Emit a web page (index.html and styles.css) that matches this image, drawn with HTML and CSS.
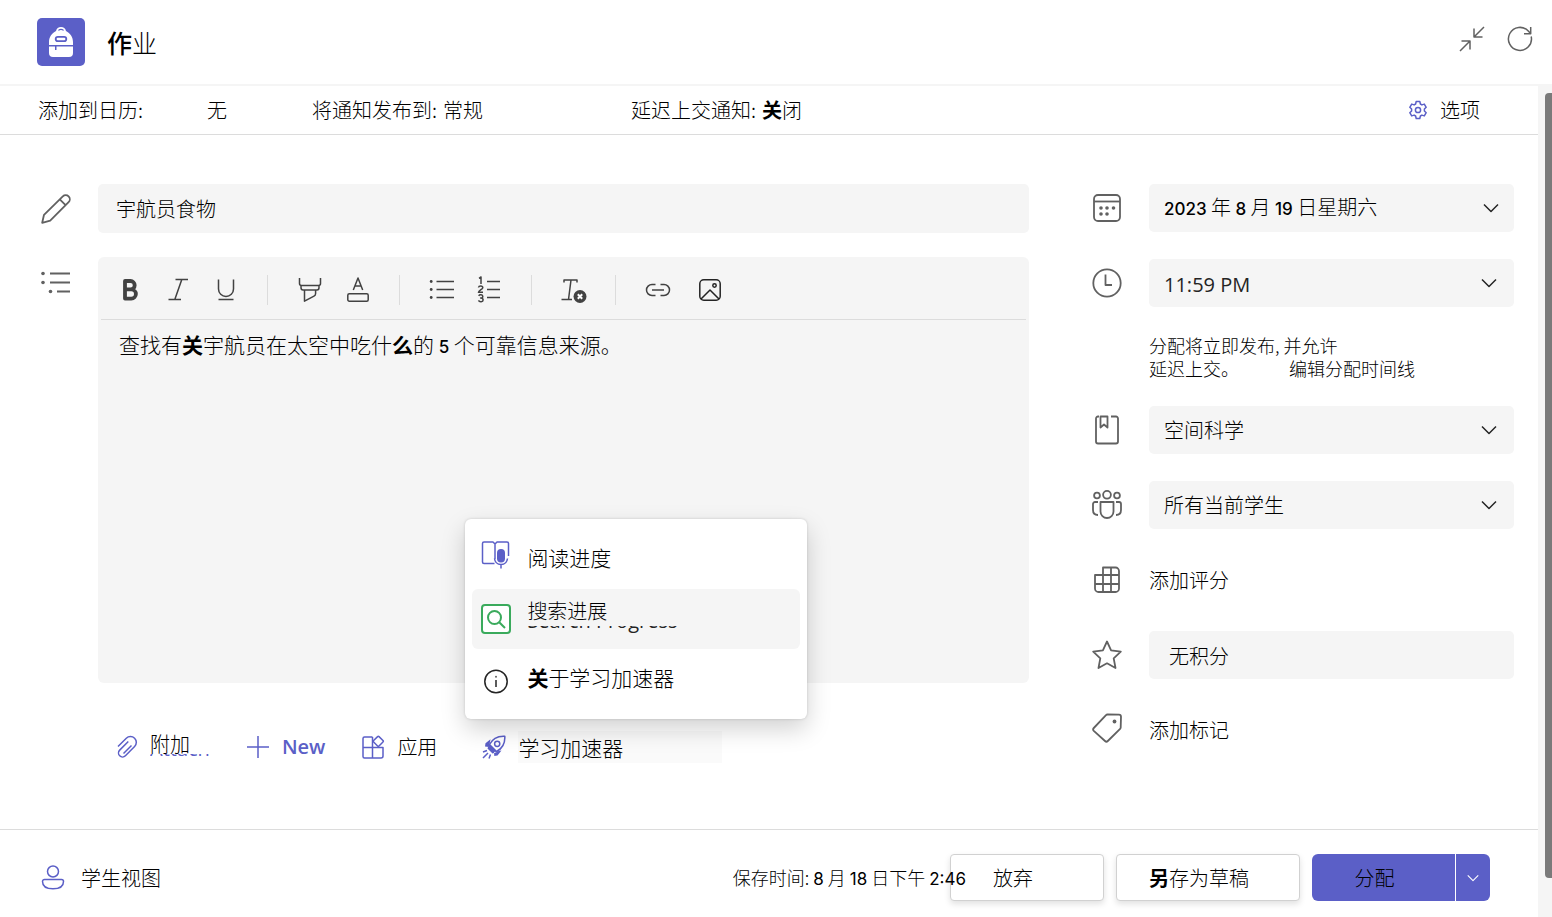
FILE: index.html
```html
<!DOCTYPE html>
<html lang="zh-CN">
<head>
<meta charset="utf-8">
<title>作业</title>
<link rel="stylesheet" href="styles.css">
</head>
<body>
<header class="app-header">
  <svg class="app-logo" viewBox="0 0 48 48" aria-hidden="true">
    <rect width="48" height="48" rx="5" fill="#5b5fc7"/>
    <path d="M19 13C19.5 10.500 21.500 9 24 9s4.500 1.500 5 4c4.300 2.200 7 6.200 7 11v3H12v-3c0-4.800 2.700-8.800 7-11zM12 28.500h6v3.500h1.500v-3.500H36v6.500a4 4 0 0 1-4 4H16a4 4 0 0 1-4-4z" fill="#fff"/>
    <path d="M21.500 12.500c.5-1.500 4.500-1.500 5 0" fill="none" stroke="#5b5fc7" stroke-width="1.200"/>
    <rect x="18.700" y="18.800" width="10.600" height="4.400" rx="2.200" fill="none" stroke="#5b5fc7" stroke-width="1.800"/>
  </svg>
  <h1 class="app-title"><b>作</b>业</h1>
  <button class="icon-button" aria-label="收起">
    <svg width="26" height="26" viewBox="0 0 26 26"><path d="M25 1 15 11M15 2.500V11h8.500M1 25l10-10M2.500 15H11v8.500"/></svg>
  </button>
  <button class="icon-button" aria-label="刷新">
    <svg width="26" height="26" viewBox="0 0 26 26"><path d="M24.200 10.500A11.500 11.500 0 1 1 21.500 5.200L23.500 7.500M23.700 1v6.700H17"/></svg>
  </button>
</header>

<div class="viewport">
  <main class="page">
    <section class="settings">
      <div class="setting setting-wide"><span>添加到日历:</span><span>无</span></div>
      <div class="setting">将通知发布到:<span>常规</span></div>
      <div class="setting">延迟上交通知:<span><b>关</b>闭</span></div>
      <button class="options">
        <svg width="20" height="20" viewBox="0 0 20 20"><path d="M8.200 1.500h3.600l.6 2.500 1.500.9 2.400-.8 1.900 3.200L16.400 9v2l1.800 1.700-1.900 3.200-2.400-.8-1.500.9-.6 2.500H8.200L7.600 16l-1.500-.9-2.400.8-1.900-3.200L3.600 11V9L1.800 7.300l1.900-3.200 2.400.8L7.600 4z"/><circle cx="10" cy="10" r="2.600"/></svg>
        <span>选项</span>
      </button>
    </section>

    <div class="content">
      <section class="compose">
        <label class="row-icon" for="title" aria-label="标题">
          <svg width="30" height="30" viewBox="0 0 30 30"><path d="M1.200 28.800 3 20.800 21.800 2.400a4 4 0 0 1 5.800 5.800L9.200 26.600zM18.800 5.400l5.800 5.800"/></svg>
        </label>
        <input class="field title-input" id="title" type="text" value="宇航员食物">

        <span class="row-icon row-icon-top">
          <svg width="30" height="24" viewBox="0 0 30 24"><path d="M9 3.500h20M9 12.500h20M16 21.500h13"/><g class="fill"><circle cx="2" cy="3.500" r="1.800"/><circle cx="2" cy="12.500" r="1.800"/><circle cx="9.500" cy="21.500" r="1.800"/></g></svg>
        </span>
        <div class="editor">
          <div class="toolbar">
            <button aria-label="加粗"><svg width="26" height="26" viewBox="0 0 26 26"><path d="M8 4h5.500a4.200 4.200 0 0 1 0 8.400H8zM8 12.400h6.300a4.600 4.600 0 0 1 0 9.200H8z" stroke-width="3.800"/></svg></button>
            <button aria-label="斜体"><svg width="26" height="26" viewBox="0 0 26 26"><path d="M10.500 2.500H23M3.500 22.500H16M16.800 2.500l-7 20"/></svg></button>
            <button aria-label="下划线"><svg width="26" height="26" viewBox="0 0 26 26"><path d="M5.500 2.500V12a7.500 7.500 0 0 0 15 0V2.500M5.500 22.500h15"/></svg></button>
            <i class="divider"></i>
            <button aria-label="突出显示"><svg width="26" height="26" viewBox="0 0 26 26"><path d="M2.500 1v5.500c0 1.200.8 2 2 2h17c1.200 0 2-.8 2-2V1M4 8.500v2c0 1.500.8 2.500 2 2.500h14c1.200 0 2-1 2-2.500v-2M7.500 13v11.200l9.500-5a3 3 0 0 0 1.600-2.700V13"/></svg></button>
            <button aria-label="字体颜色"><svg width="26" height="26" viewBox="0 0 26 26"><path d="m8.300 13 4.700-12 4.700 12M10 9h6"/><rect x="2.800" y="16.800" width="20.400" height="7.400" rx="1.500"/></svg></button>
            <i class="divider"></i>
            <button aria-label="项目符号"><svg width="26" height="26" viewBox="0 0 26 26"><path d="M7.500 4.500H25M7.500 12.500H25M7.500 20.500H25"/><g class="fill"><circle cx="2.200" cy="4.500" r="1.400"/><circle cx="2.200" cy="12.500" r="1.400"/><circle cx="2.200" cy="20.500" r="1.400"/></g></svg></button>
            <button aria-label="编号"><svg width="26" height="28" viewBox="0 0 26 28"><path d="M10 5.500h13M10 13.500h13M10 21.500h13"/><path d="M2 2.300 4 1v7M1.500 11.500c.3-2 4.300-2 4.300.2 0 1.300-4 2.800-4.300 4.600H6M1.700 19.800c1-1.700 4.100-1.100 4.100.6 0 1.100-1 1.600-2.200 1.600 1.500 0 2.500.7 2.500 2 0 2.100-3.700 2.400-4.600.4"/></svg></button>
            <i class="divider"></i>
            <button aria-label="清除格式"><svg width="26" height="28" viewBox="0 0 26 28"><path d="M3 6.500V4h13v2.500M10 4 7.500 23.500M.5 23.500H11"/><circle class="fill" cx="19" cy="20.500" r="6.500"/><path class="cross" d="m16.800 18.300 4.400 4.400m0-4.400-4.400 4.400"/></svg></button>
            <i class="divider"></i>
            <button aria-label="链接"><svg width="26" height="26" viewBox="0 0 26 26"><path d="M10.500 7.500H7a5.500 5.500 0 0 0 0 11h3.500M15.500 7.500H19a5.500 5.500 0 0 1 0 11h-3.500M7 13h12"/></svg></button>
            <button class="image-button" aria-label="图像"><svg class="dark" width="26" height="26" viewBox="0 0 26 26"><rect x="2.800" y="2.800" width="20.400" height="20.400" rx="4"/><path d="m4 22 9-9 9 9"/><circle cx="17.500" cy="8.500" r="1.700"/></svg></button>
          </div>
          <div class="editor-text" contenteditable="true" role="textbox" aria-label="说明">查找有<b>关</b>宇航员在太空中吃什<b>么</b>的 <span class="num">5</span> 个可靠信息来源。</div>
        </div>

        <div class="attachments">
          <button class="action">
            <svg width="22" height="24" viewBox="0 0 22 24"><path d="m2 11.500 8.300-8.300a5.800 5.800 0 0 1 8.300 8.300l-9.200 9.300a4 4 0 0 1-5.700-5.700l8.600-8.600M7.500 18.500l8-8"/></svg>
            <span class="stack"><span>附加</span><span class="remnant" aria-hidden="true"><span>Attach</span></span></span>
          </button>
          <button class="action">
            <svg width="24" height="24" viewBox="0 0 24 24"><path d="M12 1v22M1 12h22"/></svg>
            <span class="new">New</span>
          </button>
          <button class="action">
            <svg width="24" height="24" viewBox="0 0 24 24"><path d="M11.500 2H3.500A1.500 1.500 0 0 0 2 3.500v18A1.500 1.500 0 0 0 3.500 23H20a2 2 0 0 0 2-2v-8.500H2M11.500 2v21"/><rect x="13.500" y="2.500" width="7.600" height="7.600" rx="1" transform="rotate(45 17.300 6.300)"/></svg>
            <span>应用</span>
          </button>
          <div class="accelerator">
            <button class="action">
              <svg width="24" height="24" viewBox="0 0 24 24"><path d="M7.500 9.500C10.500 3.500 16 .8 22.800 1.200 23.200 8 20.500 13.500 14.500 16.500z"/><path class="fill" d="M8.500 4.200 3.500 8.300 3 11.500l4 .5zM19.500 15.500l-4 5-3.200.5-.3-4zM7 9l-1.500 4.500 5 5L15 17z"/><circle cx="15.200" cy="8.800" r="2.600"/><path d="M5 15.500 1 17M6 18l-5 5M8.500 19.500 7 23.500"/></svg>
              <span class="accelerator-label">学习加速器</span>
            </button>
            <div class="menu" role="menu">
              <button class="menu-item" role="menuitem">
                <svg class="brand" width="30" height="34" viewBox="0 0 30 34"><path d="M13.500 23.500H3A1.500 1.500 0 0 1 1.500 22V3.500A1.500 1.500 0 0 1 3 2h9l2 2v15M14 4l2-2h10a1.500 1.500 0 0 1 1.500 1.500V16M13.500 18.500c.5 4 3 6 6.500 6s6-2 6.500-6M20 24.500v4"/><rect class="fill" x="16" y="9" width="8" height="13.500" rx="4"/></svg>
                <span>阅读进度</span>
              </button>
              <button class="menu-item selected" role="menuitem">
                <svg class="green" width="30" height="30" viewBox="0 0 30 30"><rect x="1" y="1" width="28" height="28" rx="3" fill="#fff"/><circle cx="13.500" cy="13.500" r="6.500"/><path d="m18.200 18.200 5.800 5.800"/></svg>
                <span class="stack"><span>搜索进展</span><span class="remnant" aria-hidden="true"><span>Search Progress</span></span></span>
              </button>
              <button class="menu-item" role="menuitem">
                <svg class="dark" width="30" height="34" viewBox="0 0 30 34"><circle cx="15" cy="21.500" r="11.200"/><path d="M15 20v7"/><circle class="fill" cx="15" cy="16.800" r="1"/></svg>
                <span><b>关</b>于学习加速器</span>
              </button>
            </div>
          </div>
        </div>
      </section>

      <aside class="details">
        <span class="row-icon"><svg width="30" height="30" viewBox="0 0 30 30"><rect x="2" y="2" width="26" height="26" rx="4"/><path d="M2 8.500h26"/><g class="fill"><circle cx="9" cy="15" r="1.800"/><circle cx="15" cy="15" r="1.800"/><circle cx="21.500" cy="15" r="1.800"/><circle cx="9" cy="21" r="1.800"/><circle cx="15" cy="21" r="1.800"/></g></svg></span>
        <button class="field picker" aria-label="截止日期">
          <span><span class="num">2023</span> 年 <span class="num">8</span> 月 <span class="num">19</span> 日星期六</span>
          <svg width="16" height="16" viewBox="0 0 16 16"><path d="m1 4.500 7 7 7-7"/></svg>
        </button>

        <label class="row-icon" for="time" aria-label="截止时间"><svg width="30" height="30" viewBox="0 0 30 30"><circle cx="15" cy="15" r="13.700"/><path d="M13.500 6.500V17h6.500"/></svg></label>
        <div class="select"><select class="field latin" id="time"><option>11:59 PM</option></select><svg width="16" height="16" viewBox="0 0 16 16"><path d="m1 4.500 7 7 7-7"/></svg></div>

        <p class="note">分配将立即发布, 并允许<br>延迟上交。 <a href="#timeline">编辑分配时间线</a></p>

        <label class="row-icon" for="module" aria-label="模块"><svg width="30" height="30" viewBox="0 0 30 30"><path d="M7 1.500H6a2 2 0 0 0-2 2v23a2 2 0 0 0 2 2h18a2 2 0 0 0 2-2v-23a2 2 0 0 0-2-2h-5M8.500 1.500h7v11L12 9.500l-3.500 3z"/></svg></label>
        <div class="select"><select class="field" id="module"><option>空间科学</option></select><svg width="16" height="16" viewBox="0 0 16 16"><path d="m1 4.500 7 7 7-7"/></svg></div>

        <label class="row-icon" for="students" aria-label="学生"><svg width="30" height="30" viewBox="0 0 30 30"><circle cx="15" cy="4.800" r="3.900"/><circle cx="5" cy="5.500" r="2.900"/><circle cx="25" cy="5.500" r="2.900"/><path d="M8.500 12h13v9.500a6.500 6.500 0 0 1-13 0zM6 12H3a2 2 0 0 0-2 2v6c0 3 2 5 5 5M24 12h3a2 2 0 0 1 2 2v6c0 3-2 5-5 5"/></svg></label>
        <div class="select"><select class="field" id="students"><option>所有当前学生</option></select><svg width="16" height="16" viewBox="0 0 16 16"><path d="m1 4.500 7 7 7-7"/></svg></div>

        <span class="row-icon"><svg width="30" height="30" viewBox="0 0 30 30"><path d="M11 2.500h12.500a3.500 3.500 0 0 1 3.500 3.500v17.500a3.500 3.500 0 0 1-3.500 3.500H6.500A3.500 3.500 0 0 1 3 23.500V10h8zM11 10h16M3 19h24M11 10v17M19 2.500V27"/></svg></span>
        <button class="add">添加评分</button>

        <label class="row-icon" for="points" aria-label="积分"><svg width="30" height="30" viewBox="0 0 30 30"><path d="m15 1.500 4.100 8.800 9.700 1.300-7.100 6.700 1.800 9.700-8.500-4.700L6.500 28l1.800-9.700-7.100-6.700 9.700-1.300z"/></svg></label>
        <input class="field points" id="points" type="text" value="无积分">

        <span class="row-icon"><svg width="30" height="34" viewBox="0 0 30 34"><path d="M15.500 1.500 27 1.700a2 2 0 0 1 2 2l-.3 10.800a2 2 0 0 1-.6 1.400L15.800 28a2 2 0 0 1-2.800 0L1.800 17.800a2 2 0 0 1 0-2.800L14 2.200a2 2 0 0 1 1.500-.7z"/><circle class="fill" cx="22.500" cy="8.500" r="1.900"/></svg></span>
        <button class="add">添加标记</button>
      </aside>
    </div>

    <footer class="footer">
      <button class="student-view">
        <svg width="24" height="26" viewBox="0 0 24 26"><circle cx="12" cy="6.500" r="5.500"/><path d="M3.500 14.500h17a2 2 0 0 1 2 2c0 5-4.500 7.300-10.500 7.300S1.500 21.500 1.500 16.500a2 2 0 0 1 2-2z"/></svg>
        <span>学生视图</span>
      </button>
      <span class="saved">保存时间: <span class="num">8</span> 月 <span class="num">18</span> 日下午 <span class="num">2:46</span></span>
      <button class="button discard">放弃</button>
      <button class="button draft"><span><b>另</b>存为草稿</span></button>
      <div class="split">
        <button class="assign">分配</button>
        <button class="more" aria-label="更多分配选项"><svg width="12" height="12" viewBox="0 0 16 16"><path d="m1 4.500 7 7 7-7"/></svg></button>
      </div>
    </footer>
  </main>
  <div class="scroll-track"><div class="scroll-thumb"></div></div>
</div>
</body>
</html>
```

FILE: styles.css
```css
:root {
  --brand: #5b5fc7;
  --surface: #f5f5f5;
  --line: #dcdcdc;
  --icon: #616161;
}

* {
  box-sizing: border-box;
}

body {
  margin: 0;
  min-height: 100vh;
  display: flex;
  flex-direction: column;
  background: #fff;
  color: #000;
  font-family: "Noto Sans CJK SC", sans-serif;
  font-size: 20px;
  font-weight: 300;
  line-height: 24px;
}

button,
input,
select {
  margin: 0;
  padding: 0;
  border: 0;
  background: none;
  color: inherit;
  font: inherit;
}

svg {
  display: block;
  flex: none;
  fill: none;
  stroke: var(--icon);
  stroke-width: 1.5;
  stroke-linejoin: round;
}

svg .fill {
  fill: var(--icon);
  stroke: none;
}

b {
  font-weight: 700;
}

.num {
  font-family: Inter, sans-serif;
  font-size: 17px;
  font-weight: 500;
}

.app-header {
  display: flex;
  align-items: center;
  gap: 22px;
  padding: 18px 19px 18px 37px;
  border-bottom: 2px solid var(--surface);
}

.app-logo {
  width: 48px;
  height: 48px;
  stroke: none;
}

.app-title {
  flex: 1;
  margin: 0;
  font-size: 25px;
  font-weight: 300;
}

.app-title b {
  font-weight: 500;
}

.icon-button {
  padding-bottom: 6px;
}

.viewport {
  flex: 1;
  display: flex;
}

.page {
  flex: 1;
  min-width: 0;
  display: flex;
  flex-direction: column;
}

.scroll-track {
  width: 14px;
  padding: 7px 0 39px 7px;
  background: var(--surface);
  display: flex;
}

.scroll-thumb {
  flex: 1;
  border-radius: 4px 0 0 4px;
  background: #7a7a7a;
}

.settings {
  display: grid;
  grid-template-columns: 274px 319px 1fr auto;
  align-items: center;
  padding: 12px 58px 12px 38px;
  border-bottom: 1px solid var(--line);
}

.setting {
  display: flex;
  gap: 6px;
}

.setting-wide {
  gap: 64px;
}

.options {
  display: flex;
  align-items: center;
  gap: 12px;
}

.options svg,
.student-view svg,
.action svg {
  stroke: var(--brand);
}

.content {
  flex: 1;
  display: flex;
  align-items: flex-start;
  gap: 63px;
  padding: 49px 24px 0 41px;
}

.compose {
  flex: 1;
  display: grid;
  grid-template-columns: 30px 1fr;
  column-gap: 27px;
  row-gap: 24px;
}

.row-icon {
  display: flex;
  align-items: center;
  justify-content: center;
}

.row-icon svg {
  stroke-width: 1.8;
}

.row-icon-top {
  align-items: flex-start;
  padding-top: 13px;
}

.field {
  width: 100%;
  height: 48px;
  padding: 0 15px;
  border-radius: 5px;
  background: var(--surface);
}

.title-input {
  height: 49px;
  padding: 0 18px;
}

.editor {
  min-height: 426px;
  border-radius: 6px;
  background: var(--surface);
}

.toolbar {
  display: flex;
  align-items: center;
  gap: 22px;
  height: 63px;
  margin: 0 3px;
  padding: 3px 16px 0;
  border-bottom: 1px solid var(--line);
}

.toolbar svg {
  stroke: #424242;
}

.toolbar svg.dark {
  stroke: #242424;
}

.toolbar svg .fill {
  fill: #424242;
}

.toolbar svg .cross {
  stroke: #fff;
  stroke-width: 2;
}

.divider {
  width: 1px;
  height: 30px;
  margin: 0 7px 0 6px;
  background: var(--line);
}

.image-button {
  margin-left: 4px;
}

.editor-text {
  padding: 12px 21px;
  font-size: 21px;
  outline: 0;
}

.attachments {
  grid-column: 2;
  display: flex;
  align-items: center;
  gap: 36px;
  margin-top: 24px;
  padding-left: 18px;
}

.action {
  display: flex;
  align-items: center;
  gap: 12px;
  height: 32px;
}

.action svg .fill,
.menu .brand .fill {
  fill: var(--brand);
}

.stack {
  display: flex;
  flex-direction: column;
  align-items: flex-start;
  line-height: 20px;
}

.remnant {
  display: flex;
  align-items: flex-end;
  height: 7px;
  overflow: hidden;
  color: var(--brand);
  font-family: "Open Sans", sans-serif;
  font-weight: 400;
  line-height: 24px;
}

.menu .stack {
  gap: 5px;
  padding-bottom: 4px;
}

.menu .remnant {
  color: #242424;
}

.new {
  color: var(--brand);
  font-family: "Open Sans", sans-serif;
  font-weight: 600;
}

.accelerator {
  position: relative;
  padding-left: 9px;
}

.accelerator-label {
  min-width: 204px;
  padding: 4px 0;
  background: #fafafa;
  font-size: 21px;
  text-align: left;
}

.menu {
  position: absolute;
  bottom: calc(100% + 12px);
  left: -8px;
  width: 342px;
  padding: 10px 7px;
  border-radius: 6px;
  background: #fff;
  box-shadow: 0 10px 24px rgba(0, 0, 0, 0.18), 0 0 3px rgba(0, 0, 0, 0.16);
}

.menu-item {
  display: flex;
  align-items: center;
  gap: 16px;
  width: 100%;
  height: 60px;
  padding: 0 9px 4px;
  border-radius: 6px;
  font-size: 21px;
  text-align: left;
}

.menu-item.selected {
  padding-bottom: 0;
  background: var(--surface);
  font-size: 20px;
}

.menu .brand {
  stroke: var(--brand);
}

.menu .green {
  stroke: #3aaa5c;
  stroke-width: 2;
}

svg.dark,
.action svg.dark {
  stroke: #242424;
}

.details {
  width: 422px;
  display: grid;
  grid-template-columns: 30px 1fr;
  grid-template-rows: 48px 48px 45px;
  grid-auto-rows: 48px;
  gap: 27px;
}

.picker {
  display: flex;
  align-items: center;
  justify-content: space-between;
}

.picker svg,
.select svg {
  stroke: #242424;
}

.select {
  position: relative;
}

.select select {
  appearance: none;
}

.select svg {
  position: absolute;
  top: 16px;
  right: 17px;
  pointer-events: none;
}

.latin {
  padding-top: 3px;
  color: #242424;
  font-family: "Open Sans", sans-serif;
  font-weight: 400;
}

.note {
  grid-column: 2;
  margin: 0;
  font-size: 18px;
  line-height: 23px;
}

.note a {
  margin-left: 46px;
  color: inherit;
  text-decoration: none;
}

.add {
  text-align: left;
}

.points {
  padding: 0 20px;
}

.footer {
  display: flex;
  align-items: center;
  gap: 12px;
  padding: 24px 48px 16px 41px;
  border-top: 1px solid var(--line);
}

.student-view {
  display: flex;
  align-items: center;
  gap: 16px;
  margin-right: auto;
}

.saved {
  z-index: 1;
  margin-right: -28px;
  font-size: 18px;
}

.saved .num {
  font-weight: 400;
}

.button {
  height: 47px;
  border: 1px solid #d1d1d1;
  border-radius: 4px;
  background: #fff;
  box-shadow: 0 3px 6px rgba(0, 0, 0, 0.12);
  text-align: left;
}

.discard {
  width: 154px;
  padding-left: 42px;
}

.draft {
  width: 184px;
  padding-left: 32px;
}

.split {
  display: flex;
  height: 47px;
  border-radius: 6px;
  overflow: hidden;
  background: var(--brand);
}

.assign {
  width: 143px;
  padding-right: 18px;
}

.more {
  display: grid;
  place-items: center;
  width: 35px;
  border-left: 1px solid #fff;
}

.more svg {
  stroke: #fff;
}
```
